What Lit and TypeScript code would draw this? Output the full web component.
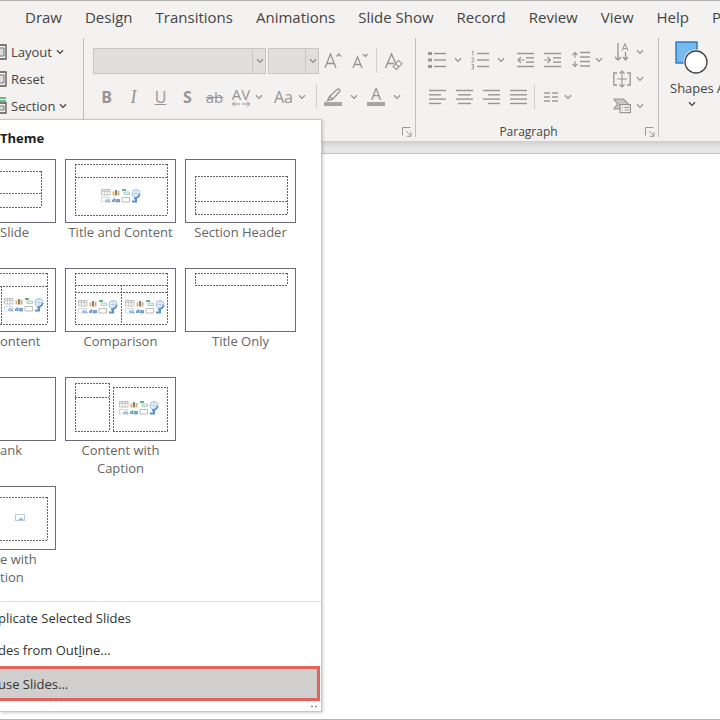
import { LitElement, html, svg, css, nothing, TemplateResult } from "lit";
import { customElement, property } from "lit/decorators.js";

const chevron = html`<svg class="chev" width="8" height="6" viewBox="0 0 8 6" aria-hidden="true">
  <path d="M1 1.2L4 4.4L7 1.2" fill="none" stroke="currentColor" stroke-width="1.3" />
</svg>`;

const icon = (w: number, h: number, body: TemplateResult) => html`<svg
  width=${w} height=${h} viewBox="0 0 ${w} ${h}" fill="none" stroke="currentColor" aria-hidden="true">${body}</svg>`;

const lines = (rows: number[][]) =>
  svg`${rows.map(([x1, x2, y]) => svg`<path d="M${x1} ${y}H${x2}" stroke-width="1.4" />`)}`;

const eraser = icon(20, 20, svg`
  <path d="M1.5 17L7.5 3L12 13M3.5 12.5H10" stroke-width="1.4" />
  <path d="M9 15.5L14.5 9.5L18 12.5L12.5 18.5ZM11.5 13L15 16" stroke-width="1.1" />`);

const bullets = icon(18, 18, svg`
  <path d="M0 2.5H4M0 9H4M0 15.5H4" stroke-width="3.2" />
  ${lines([[6, 18, 2.5], [6, 18, 9], [6, 18, 15.5]])}`);

const numbers = icon(18, 20, svg`
  <path d="M1 1.5L2 1V5.5M.5 8H2.5V10L.5 12H3M.5 14.5H2.5V19H.5M1 16.7H2.5" stroke-width=".9" />
  ${lines([[6, 18, 3.5], [6, 18, 10], [6, 18, 16.5]])}`);

const outdent = icon(17, 16, svg`
  ${lines([[0, 17, 1.5], [9, 17, 5.8], [9, 17, 10.1], [0, 17, 14.5]])}
  <path d="M7.5 8H1M4 5L1 8L4 11" stroke-width="1.1" />`);

const indent = icon(17, 16, svg`
  ${lines([[0, 17, 1.5], [9, 17, 5.8], [9, 17, 10.1], [0, 17, 14.5]])}
  <path d="M0 8H6.5M3.5 5L6.5 8L3.5 11" stroke-width="1.1" />`);

const spacing = icon(18, 17, svg`
  ${lines([[8, 18, 1.5], [8, 18, 6], [8, 18, 10.5], [8, 18, 15]])}
  <path d="M3 7V1.5M.5 4L3 1.5L5.5 4M3 10V15.5M.5 13L3 15.5L5.5 13" stroke-width="1.1" />`);

const alignIcon = (kind: string) => {
  const short = kind === "left" ? [0, 12] : kind === "center" ? [2, 15] : kind === "right" ? [5, 17] : [0, 17];
  return icon(17, 16, lines([[0, 17, 1.5], [...short, 5.8], [0, 17, 10.1], [...short, 14.5]]));
};

const columns = icon(15, 10, lines([[0, 6, 1], [8, 14, 1], [0, 6, 5], [8, 14, 5], [0, 6, 9], [8, 14, 9]]));

const direction = icon(18, 20, svg`
  <path d="M5 1V18M2 15L5 18L8 15" stroke-width="1.3" />
  <path d="M9 9L12 1.5L15 9M10 6.5H14" stroke-width="1" />
  <path d="M12.500 10V18M10 15L12.500 18L15 15" stroke-width="1.3" />`);

const alignText = icon(18, 18, svg`
  <path d="M4 3H.8V15H4M14 3H17.200V15H14" stroke-width="1.3" />
  <path d="M9 1V17M6.500 3.500L9 1L11.500 3.500M6.500 14.500L9 17L11.500 14.500M4 9H14" stroke-width="1.1" />`);

const smartArt = icon(18, 16, svg`
  <path d="M.8 1H10.500L15 5.500V6.500H7.500V11H.8L4.500 6Z" fill="#c8c6c4" stroke-width="1.1" />
  <rect x="7" y="6.600" width="10.400" height="8" fill="#f3f2f1" stroke-width="1.2" />
  <path d="M9 9.500H10M11.500 9.500H16M9 12H10M11.500 12H16" stroke-width="1" />`);

const launcherIcon = icon(10, 10, svg`
  <path d="M.5 8.500V.5H8.500M4 4L9 9M9 5V9.300H4.700" stroke-width="1" />`);

const pen = icon(18, 20, svg`
  <path d="M5.500 9.500L13 2.500Q15.500 1 16 4L9 12ZM5.500 9.500L3.500 13.500L9 12" stroke-width="1.3" />
  <rect x="0" y="15" width="18" height="4" fill="#a8a6a4" stroke="none" />`);

const slideIcon = (accent: boolean) => icon(7, 17, svg`
  ${accent ? svg`<path d="M0 1H6M0 4H6" stroke="#4aa564" stroke-width="1.500" />` : nothing}
  <path d="M0 ${accent ? 6 : 2}H6V16H0" stroke="#555" stroke-width="1.300" />
  <path d="M0 ${accent ? 9 : 5}H4V13H0" stroke="#777" fill="#ddd" stroke-width="1" />`);

const shapesIcon = icon(33, 34, svg`
  <rect x="1" y="1" width="21" height="21" fill="#76bbf0" stroke="#1f6eb5" stroke-width="1.300" />
  <circle cx="21" cy="21" r="12.500" fill="#f3f2f1" stroke="none" />
  <circle cx="21" cy="21" r="11" fill="#fff" stroke="#444" stroke-width="1.300" />`);

const mediaIcons = (x: number, y: number) => svg`<g transform="translate(${x} ${y})" fill="none" stroke-width=".8">
  <path d="M.5 .5H9V6H.5ZM.5 2.300H9M3.300 .5V6M6.200 .5V6" stroke="#b4b4b4" />
  <path d="M12.500 2.500V6.500" stroke="#e0b765" stroke-width="2" />
  <path d="M15 1V6.500" stroke="#858585" stroke-width="2" />
  <path d="M17.500 2V6.500" stroke="#d4b07a" stroke-width="2" />
  <path d="M21 1H25" stroke="#5fae8e" stroke-width="2" />
  <path d="M23 3H28.500V5.500H23Z" stroke="#9cc5b4" fill="#e4f2ec" />
  <circle cx="35" cy="4.500" r="4" stroke="#8fb4d6" fill="#eaf3fb" />
  <path d="M31 4.500H39M35 .5V8" stroke="#b3cbe2" />
  <path d="M38.500 5Q38 9 33 9.500M31 12.500H35V9" stroke="#5a92cf" stroke-width="2" />
  <path d="M.5 8.500H8.500V13H.5Z" stroke="#c3d3e2" />
  <path d="M4 12L6.500 10L9.500 13Z" stroke="#7ba8d6" fill="#b9d6f0" />
  <path d="M11.500 13V11L14 9.500V13M15.500 10.500H18.500V13H15.500Z" stroke="#5c8cc3" fill="#7fadd9" />
  <path d="M21 8.500H28.500V13H21Z" stroke="#a9a9a9" />
</g>`;

interface Layout { name: string; cut?: boolean; art: TemplateResult | typeof nothing }

const dash = (d: string) => svg`<path class="dash" d=${d} />`;

const layouts: Layout[] = [
  { name: "Slide", cut: true, art: dash("M0 12.5H42M0 34.5H42M0 48.5H42M41.5 12V48") },
  { name: "Title and Content", art: svg`${dash("M10 5.5H103M10 18.5H103M10 56.5H103M10.5 5V56M102.5 5V56")}${mediaIcons(36, 30)}` },
  { name: "Section Header", art: dash("M10 17.5H103M10 42.5H103M10 55.5H103M10.5 17V55M102.5 17V55") },
  { name: "ontent", cut: true, art: svg`${dash("M0 5.5H48M0 18.5H48M0 56.5H48M1.5 18V56M47.5 5V56")}${mediaIcons(4, 30)}` },
  { name: "Comparison", art: svg`${dash("M10 5.5H103M10 17.5H103M10 24.5H103M10 56.5H103M10.5 5V56M56.5 17V56M102.500 5V56")}${mediaIcons(13, 32)}${mediaIcons(60, 32)}` },
  { name: "Title Only", art: dash("M10 5.5H103M10 17.5H103M10.5 5V17M102.5 5V17") },
  { name: "ank", cut: true, art: nothing },
  { name: "Content with Caption", art: svg`${dash("M10 6.5H44M10 20.5H44M10 54.500H44M10.5 6V54M44.500 6V54M48 10.500H103M48 54.500H103M48.500 10V54M102.500 10V54")}${mediaIcons(54, 24)}` },
  {
    name: "e with tion",
    cut: true,
    art: svg`${dash("M0 11.5H48M0 54.5H48M47.5 11V54")}
      <rect x="15.500" y="28.500" width="9" height="6" fill="none" stroke="#b9c9d8" />
      <path d="M18 34L21 31.500L24 34Z" fill="#8db6de" />`,
  },
];

@customElement("split-button")
class SplitButton extends LitElement {
  @property() label = "";
  @property({ type: Boolean }) menu = false;
  @property({ type: Boolean, reflect: true }) tight = false;

  static styles = css`
    :host { display: block; flex: none; }
    button {
      display: flex; align-items: center; justify-content: center; gap: 8px;
      box-sizing: border-box; min-width: 27px; height: 27px; padding: 0;
      border: 0; background: none; color: #979593;
      font: 18px/20px "Open Sans", "Noto Sans", sans-serif;
    }
    button.menu { min-width: 43px; padding: 0 4px; justify-content: flex-start; }
    :host([tight]) button { gap: 5px; min-width: 38px; }
    .chev { flex: none; }
  `;

  render() {
    return html`<button type="button" class=${this.menu ? "menu" : ""} aria-label=${this.label} disabled>
      <slot></slot>${this.menu ? chevron : nothing}
    </button>`;
  }
}

@customElement("layout-menu")
class LayoutMenu extends LitElement {
  static styles = css`
    :host {
      display: block; box-sizing: border-box; background: #fff;
      border: 1px solid #c6c6c6; border-left: 0; box-shadow: 1px 1px 3px #0003;
      font: 13px/18px "Open Sans", "Noto Sans", sans-serif; color: #333;
    }
    h2 { margin: 0; padding: 9px 0 12px; font-size: 13px; line-height: 18px; font-weight: 700; color: #1c1c1c; }
    .gallery {
      display: grid; grid-template-columns: 56px 111px 111px; column-gap: 9px;
      grid-auto-rows: 109px; height: 442px;
    }
    .tile {
      display: flex; flex-direction: column; align-items: center; padding: 0; border: 0;
      background: none; font: inherit; color: #666; text-align: center;
    }
    .tile.cut { align-items: flex-start; text-align: left; }
    .thumb { box-sizing: border-box; width: 100%; height: 64px; border: 1px solid #6b6b78; display: flex; flex: none; }
    .cut .thumb { border-left: 0; }
    .thumb svg { margin: -1px; overflow: visible; }
    .cut .thumb svg { margin-left: 0; }
    .dash { stroke: #666; stroke-width: 1; stroke-dasharray: 2 1; fill: none; }
    .name { max-width: 110px; }
    .cut .name { max-width: 40px; }
    .items { border-top: 1px solid #e1e1e1; display: flex; flex-direction: column; }
    .item {
      height: 32px; padding: 0; border: 0; background: none; text-align: left;
      font: inherit; color: #333; text-indent: -2px;
    }
    .item.hot { height: 35px; margin-right: 1px; background: #d0cfce; border: 3px solid #e4625a; border-left: 0; }
    .grip { display: flex; justify-content: flex-end; padding: 3px 3px 3px 0; }
  `;

  render() {
    return html`
      <h2>Theme</h2>
      <div class="gallery">
        ${layouts.map((l) => html`<button type="button" class="tile ${l.cut ? "cut" : ""}">
          <span class="thumb"><svg width=${l.cut ? 55 : 111} height="64" aria-hidden="true">${l.art}</svg></span>
          <span class="name">${l.name}</span>
        </button>${l.name.startsWith("Content with") ? html`<span></span>` : nothing}`)}
      </div>
      <div class="items">
        <button type="button" class="item">plicate Selected Slides</button>
        <button type="button" class="item">des from Out<u>l</u>ine...</button>
        <button type="button" class="item hot">use Slides...</button>
      </div>
      <div class="grip"><svg width="8" height="4" aria-hidden="true"><path d="M1 2.500H3M5 2.500H7" stroke="#888" stroke-width="1.500" /></svg></div>
    `;
  }
}

@customElement("app-root")
class AppRoot extends LitElement {
  static styles = css`
    :host {
      display: flex; flex-direction: column; box-sizing: border-box; position: relative;
      min-height: 100vh; overflow: hidden; background: #fff;
      border-top: 1px solid #b5b4b3; border-bottom: 1px solid #b5b5b5;
      font: 13px/18px "Open Sans", "Noto Sans", sans-serif; color: #444;
    }
    header { background: #f3f2f1; overflow: hidden; }
    nav { display: flex; gap: 23px; height: 37px; padding-left: 25px; }
    nav a { flex: none; font-size: 15px; line-height: 32px; color: #444; text-decoration: none; }
    .ribbon { display: flex; height: 103px; box-sizing: border-box; padding-bottom: 4px; }
    .group { display: flex; flex-direction: column; flex: none; box-sizing: border-box; border-right: 1px solid #c0bebc; }
    .slides { width: 84px; }
    .command {
      display: flex; align-items: center; gap: 4px; height: 27px; padding: 0; border: 0;
      background: none; font: inherit; color: #444; text-align: left;
    }
    .fonts { width: 332px; padding-left: 9px; }
    .row { display: flex; align-items: center; }
    .fonts .row { height: 27px; margin-top: 9px; }
    .combo { position: relative; display: flex; flex: none; margin-right: 2px; color: #8f8d8b; }
    .combo select {
      appearance: none; box-sizing: border-box; width: 173px; height: 26px; margin: 0;
      border: 1px solid #c8c6c4; border-radius: 0; background: #e1dfdd; opacity: 1;
    }
    .combo.size { margin-right: 0; }
    .combo.size select { width: 51px; }
    .combo .drop {
      position: absolute; inset: 0 0 0 auto; width: 13px; display: grid; place-items: center;
      border-left: 1px solid #c8c6c4; pointer-events: none;
    }
    .bar { flex: none; width: 1px; height: 25px; background: #d2d0ce; margin: 0 3px; }
    .case { margin: 0 3px; }
    .small { font-size: 16px; }
    .serif { font-family: "Liberation Serif", serif; font-size: 18px; }
    .letters { font-size: 15px; }
    .mark { display: flex; flex-direction: column; align-items: center; width: 18px; font-size: 16px; line-height: 15px; }
    .swatch { width: 18px; height: 4px; background: #a8a6a4; }
    .kern { display: flex; flex-direction: column; align-items: center; width: 18px; font-size: 15px; line-height: 14px; }
    .para { width: 243px; padding-left: 8px; }
    .body { display: flex; justify-content: space-between; padding-right: 10px; height: 82px; }
    .lists { display: flex; flex-direction: column; gap: 10px; padding-top: 8px; }
    .lists .row { gap: 2px; }
    .lists .bar { margin: 0 3px 0 0; }
    .pair { display: flex; }
    .foot { display: flex; align-items: center; margin-top: auto; padding-right: 3px; height: 11px; }
    .foot span { flex: 1; text-align: center; font-size: 12px; padding-right: 12px; }
    .launch { display: flex; padding: 0; border: 0; background: none; color: #999; }
    .draw { display: flex; flex: none; padding-left: 11px; gap: 3px; }
    .big { display: flex; flex-direction: column; align-items: center; gap: 4px; padding: 3px 0 0; border: 0; background: none; font: inherit; color: #444; }
    .big.next { padding-top: 41px; }
    .shade { height: 12px; background: linear-gradient(#cfcfcf, #e6e6e6 60%); border-bottom: 1px solid #c6c6c6; }
    main { flex: 1; }
    layout-menu { position: absolute; left: 0; top: 118px; width: 322px; }
  `;

  render() {
    const tabs = ["Draw", "Design", "Transitions", "Animations", "Slide Show", "Record", "Review", "View", "Help", "P"];
    return html`
      <header>
        <nav>${tabs.map((t) => html`<a href="#">${t}</a>`)}</nav>
        <div class="ribbon">
          <section class="group slides">
            <button type="button" class="command">${slideIcon(false)}Layout${chevron}</button>
            <button type="button" class="command">${slideIcon(false)}Reset</button>
            <button type="button" class="command">${slideIcon(true)}Section${chevron}</button>
          </section>
          <section class="group fonts">
            <div class="row">
              <label class="combo"><select aria-label="Font" disabled></select><span class="drop">${chevron}</span></label>
              <label class="combo size"><select aria-label="Font size" disabled></select><span class="drop">${chevron}</span></label>
              <split-button label="Increase font size">${icon(18, 20, svg`<path d="M1 17L6.500 3L12 17M3 12.500H10M12.500 5.500L14.800 3L17 5.500" stroke-width="1.300" />`)}</split-button>
              <split-button label="Decrease font size">${icon(18, 20, svg`<path d="M2 17L6.500 6L11 17M3.500 13.500H9.500M12 3L14.300 5.500L16.500 3" stroke-width="1.300" />`)}</split-button>
              <span class="bar"></span>
              <split-button label="Clear formatting">${eraser}</split-button>
            </div>
            <div class="row">
              <split-button label="Bold"><b class="small">B</b></split-button>
              <split-button label="Italic"><i class="serif">I</i></split-button>
              <split-button label="Underline"><u class="small">U</u></split-button>
              <split-button label="Shadow"><b class="small">S</b></split-button>
              <split-button label="Strikethrough"><s class="letters">ab</s></split-button>
              <split-button label="Character spacing" menu tight>
                <span class="kern">AV${icon(18, 6, svg`<path d="M0 3H8M3 .5L.5 3L3 5.500M10 3H18M15 .5L17.500 3L15 5.500" />`)}</span>
              </split-button>
              <split-button class="case" label="Change case" menu tight><span class="small">Aa</span></split-button>
              <span class="bar"></span>
              <split-button label="Highlight colour" menu>${pen}</split-button>
              <split-button label="Font colour" menu><span class="mark">A<span class="swatch"></span></span></split-button>
            </div>
            <div class="foot"><span></span><button type="button" class="launch" aria-label="Font settings">${launcherIcon}</button></div>
          </section>
          <section class="group para">
            <div class="body">
              <div class="lists">
                <div class="row">
                  <div class="pair">
                    <split-button label="Bullets" menu>${bullets}</split-button>
                    <split-button label="Numbering" menu>${numbers}</split-button>
                  </div>
                  <div class="pair">
                    <split-button label="Decrease indent">${outdent}</split-button>
                    <split-button label="Increase indent">${indent}</split-button>
                  </div>
                  <split-button label="Line spacing" menu tight>${spacing}</split-button>
                </div>
                <div class="row">
                  <div class="pair">
                    ${["left", "center", "right", "justify"].map((k) => html`<split-button label="Align ${k}">${alignIcon(k)}</split-button>`)}
                  </div>
                  <span class="bar"></span>
                  <split-button label="Columns" menu tight>${columns}</split-button>
                </div>
              </div>
              <div>
                <split-button label="Text direction" menu tight>${direction}</split-button>
                <split-button label="Align text" menu tight>${alignText}</split-button>
                <split-button label="Convert to SmartArt" menu tight>${smartArt}</split-button>
              </div>
            </div>
            <div class="foot"><span>Paragraph</span><button type="button" class="launch" aria-label="Paragraph settings">${launcherIcon}</button></div>
          </section>
          <section class="draw">
            <button type="button" class="big">${shapesIcon}Shapes${chevron}</button>
            <button type="button" class="big next">A</button>
          </section>
        </div>
      </header>
      <div class="shade"></div>
      <main></main>
      <layout-menu></layout-menu>
    `;
  }
}
